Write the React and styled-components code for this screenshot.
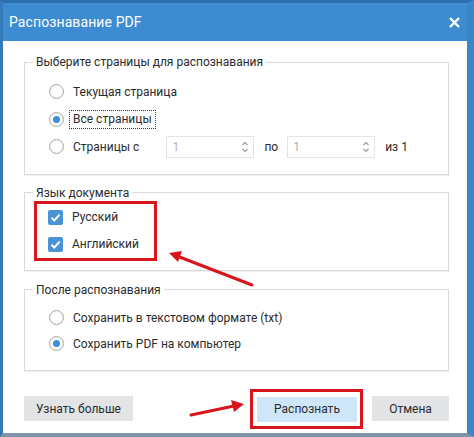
import React from "react";
import styled, { createGlobalStyle } from "styled-components";

const GlobalStyle = createGlobalStyle`
  html, body {
    margin: 0;
    padding: 0;
    background: #ffffff;
  }
  body {
    font-family: Roboto, "Noto Sans", "Liberation Sans", sans-serif;
  }
`;

const Window = styled.div`
  width: 474px;
  height: 437px;
  box-sizing: border-box;
  display: flex;
  flex-direction: column;
  background: #3d8cd2;
  border-top: 3px solid #2c6fae;
  border-left: 3px solid #3579b8;
  border-right: 7px solid #3b86c8;
  border-bottom: 4px solid #7f95a8;
`;

const TitleBar = styled.div`
  height: 38px;
  flex: none;
  display: flex;
  align-items: center;
  justify-content: space-between;
  padding: 0 6px 0 6px;
  color: #ffffff;
`;

const Title = styled.span`
  font-size: 14px;
  letter-spacing: 0.1px;
`;

const Body = styled.div`
  flex: 1;
  background: #ffffff;
  padding: 13px 18px 0 21px;
  color: #2b2b2b;
  font-size: 12px;
`;

const Group = styled.fieldset`
  position: relative;
  margin: 0 0 ${(p) => p.$gap || 0}px 0;
  padding: ${(p) => p.$pad || "8px 0 13px 0"};
  border: 1px solid #dadada;
  box-shadow: 0 1px 1px rgba(0, 0, 0, 0.06);
  min-inline-size: 0;
`;

const Legend = styled.legend`
  margin-left: 8px;
  padding: 0 3px;
  line-height: 16px;
  font-size: 12px;
  color: #2b2b2b;
`;

const Options = styled.div`
  padding-left: 24px;
`;

const Row = styled.div`
  height: ${(p) => p.$h || 27.5}px;
  display: flex;
  align-items: center;
`;

const Radio = styled.span`
  width: 15px;
  height: 15px;
  flex: none;
  box-sizing: border-box;
  border-radius: 50%;
  border: 1px solid #a9a9a9;
  background: radial-gradient(circle, #ffffff 40%, #eeeeee 100%);
  display: flex;
  align-items: center;
  justify-content: center;
  margin-right: 9px;

  &::after {
    content: "";
    width: 7px;
    height: 7px;
    border-radius: 50%;
    background: ${(p) => (p.$on ? "#3b8fdc" : "transparent")};
  }
`;

const Focus = styled.span`
  margin-left: -4px;
  padding: 0 3px 1px;
  border: 1px dotted #333333;
  line-height: 16px;
`;

const Spin = styled.div`
  width: 88px;
  height: 22px;
  box-sizing: border-box;
  border: 1px solid #e4e4e4;
  display: flex;
  align-items: center;
  justify-content: space-between;
  padding: 0 4px 0 5px;
  color: #b4b4b4;
  margin-left: ${(p) => p.$ml || 0}px;
`;

const Arrows = styled.svg`
  width: 8px;
  height: 16px;
`;

const Between = styled.span`
  margin: 0 9px 0 10px;
`;

const Marked = styled.div`
  width: 123px;
  box-sizing: border-box;
  border: 3px solid #d8141c;
  margin: 0 0 0 9px;
  padding-left: 11px;
`;

const Check = styled.span`
  width: 15px;
  height: 15px;
  flex: none;
  border-radius: 2px;
  background: #4a94d5;
  display: flex;
  align-items: center;
  justify-content: center;
  margin-right: 9px;
`;

const Overlay = styled.svg`
  position: absolute;
  left: 140px;
  top: 46px;
  width: 90px;
  height: 40px;
  pointer-events: none;
`;

const Footer = styled.div`
  margin-top: 18px;
  display: flex;
  align-items: center;
`;

const Button = styled.div`
  height: 25px;
  width: ${(p) => p.$w}px;
  display: flex;
  align-items: center;
  justify-content: center;
  background: ${(p) => (p.$primary ? "#cfe6f8" : "#e2e4e6")};
  color: #2b2b2b;
  font-size: 12px;
`;

const Highlight = styled.div`
  border: 3px solid #d8141c;
  padding: 5px 3px 4px 4px;
  margin-right: 9px;
`;

const Spacer = styled.div`
  flex: 1;
  display: flex;
  justify-content: flex-end;
  padding-right: 2px;
`;

const ArrowRight = styled.svg`
  width: 60px;
  height: 20px;
`;

function SpinArrows() {
  return (
    <Arrows viewBox="0 0 8 16">
      <path d="M1.5 6 L4 3.5 L6.5 6" fill="none" stroke="#9a9a9a" strokeWidth="1.2" />
      <path d="M1.5 10 L4 12.5 L6.5 10" fill="none" stroke="#9a9a9a" strokeWidth="1.2" />
    </Arrows>
  );
}

function CheckBox() {
  return (
    <Check>
      <svg width="11" height="11" viewBox="0 0 11 11">
        <path d="M1.5 5.8 L4.3 8.5 L9.6 2.6" fill="none" stroke="#ffffff" strokeWidth="2" />
      </svg>
    </Check>
  );
}

export default function App() {
  return (
    <>
      <GlobalStyle />
      <Window>
        <TitleBar>
          <Title>Распознавание PDF</Title>
          <svg width="13" height="13" viewBox="0 0 13 13">
            <path d="M2 2 L11 11 M11 2 L2 11" stroke="#ffffff" strokeWidth="2.4" />
          </svg>
        </TitleBar>
        <Body>
          <Group $gap={10}>
            <Legend>Выберите страницы для распознавания</Legend>
            <Options>
              <Row>
                <Radio />
                Текущая страница
              </Row>
              <Row>
                <Radio $on />
                <Focus>Все страницы</Focus>
              </Row>
              <Row>
                <Radio />
                Страницы с
                <Spin $ml={27}>
                  1
                  <SpinArrows />
                </Spin>
                <Between>по</Between>
                <Spin>
                  1
                  <SpinArrows />
                </Spin>
                <Between>из 1</Between>
              </Row>
            </Options>
          </Group>

          <Group $gap={11} $pad="0 0 9px 0">
            <Legend>Язык документа</Legend>
            <Marked>
              <Row $h={27}>
                <CheckBox />
                Русский
              </Row>
              <Row $h={27}>
                <CheckBox />
                Английский
              </Row>
            </Marked>
            <Overlay viewBox="0 0 90 40">
              <path d="M87 38 L12 9" stroke="#d8141c" strokeWidth="3" strokeLinecap="round" />
              <path d="M4 6 L17 4 L13 15 Z" fill="#d8141c" />
            </Overlay>
          </Group>

          <Group $pad="7px 0 13px 0">
            <Legend>После распознавания</Legend>
            <Options>
              <Row $h={26}>
                <Radio />
                Сохранить в текстовом формате (txt)
              </Row>
              <Row $h={26}>
                <Radio $on />
                Сохранить PDF на компьютер
              </Row>
            </Options>
          </Group>

          <Footer>
            <Button $w={109}>Узнать больше</Button>
            <Spacer>
              <ArrowRight viewBox="0 0 60 20">
                <path d="M3 16 L46 7" stroke="#d8141c" strokeWidth="3" strokeLinecap="round" />
                <path d="M56 5 L43 1 L46 13 Z" fill="#d8141c" />
              </ArrowRight>
            </Spacer>
            <Highlight>
              <Button $w={100} $primary>Распознать</Button>
            </Highlight>
            <Button $w={77}>Отмена</Button>
          </Footer>
        </Body>
      </Window>
    </>
  );
}
